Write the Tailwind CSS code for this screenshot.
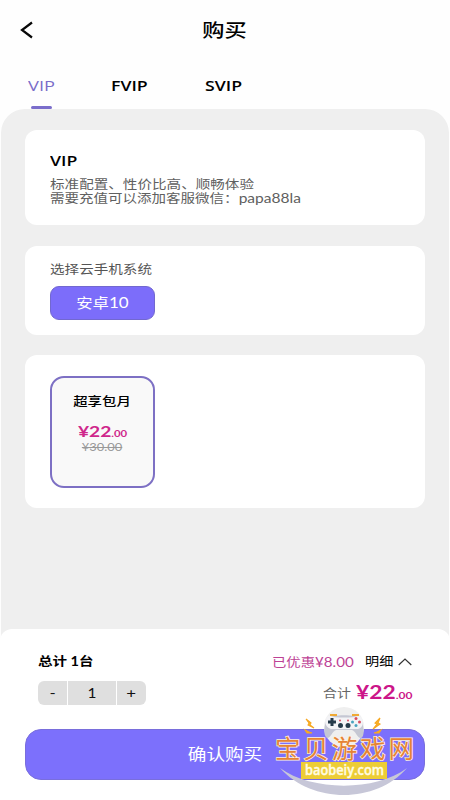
<!DOCTYPE html>
<html lang="zh-CN">
<head>
<meta charset="utf-8">
<title>购买</title>
<script src="https://cdn.jsdelivr.net/npm/@tailwindcss/browser@4"></script>
</head>
<body class="bg-white">
<div class="relative w-[450px] h-[800px] overflow-hidden bg-[#fefefe] flex flex-col font-['Lato','Noto_Sans_CJK_SC',sans-serif] text-black whitespace-nowrap">
  <header class="h-[60px] shrink-0 grid grid-cols-[1fr_auto_1fr] items-center px-5">
    <svg class="w-[14px] h-[18px]" viewBox="0 0 14 18" fill="none" stroke="#080808" stroke-width="2.2"><path d="M12 1.500 2 9l10 7.500"/></svg>
    <h1 class="text-[18.500px] leading-6 font-medium scale-x-[1.2]">购买</h1>
    <span></span>
  </header>
  <nav class="h-[49px] shrink-0 flex pl-7 pt-[16px] text-[14.500px] leading-5 font-semibold font-['Open_Sans',sans-serif]">
    <div class="w-[83px] flex flex-col text-[#7a6dc9]"><span class="w-fit font-medium origin-left scale-x-[1.260]">VIP</span><i class="block mt-[10px] ml-[3px] w-[21px] h-[3px] rounded-full bg-[#7a6dcb]"></i></div>
    <div class="w-[94px]"><span class="inline-block origin-left scale-x-[1.220]">FVIP</span></div>
    <div><span class="inline-block origin-left scale-x-[1.220]">SVIP</span></div>
  </nav>
  <main class="h-[540px] shrink-0 mx-px rounded-t-[24px] bg-[#efefef] px-6 pt-[21px] flex flex-col">
    <section class="h-[95px] rounded-xl bg-white pl-[25px] pt-[21px]">
      <h2 class="w-fit text-[14.500px] leading-5 font-semibold origin-left scale-x-[1.22] font-['Open_Sans',sans-serif]">VIP</h2>
      <div class="mt-[7px] text-[12.300px] leading-[14px] text-[#606060]">
        <p class="w-fit h-[14px] origin-left scale-x-[1.185]">标准配置、性价比高、顺畅体验</p>
        <p class="w-fit h-[14px] -mt-px origin-left scale-x-[1.18]">需要充值可以添加客服微信：<span class="text-[13.200px]">papa88la</span></p>
      </div>
    </section>
    <section class="mt-[21px] h-[89px] rounded-xl bg-white pl-[25px] pt-[16px]">
      <p class="w-fit text-[12.300px] leading-4 text-[#555] origin-left scale-x-[1.185]">选择云手机系统</p>
      <div class="mt-2 w-[105px] h-[34px] rounded-[9px] border border-[#7268cf] bg-[#7c6dfa] text-white flex items-center justify-center text-[14px]"><span class="scale-x-[1.17]">安卓<span class="text-[14.500px]">10</span></span></div>
    </section>
    <section class="mt-5 h-[153px] rounded-xl bg-white pl-[25px] pt-[21px]">
      <div class="w-[105px] h-[112px] rounded-[14px] border-2 border-[#7d70c4] bg-[#f9f9f9] flex flex-col items-center">
        <h3 class="mt-[16px] text-[12px] leading-4 font-medium scale-x-[1.2]">超享包月</h3>
        <p class="mt-[11px] text-[#cf278b] font-bold leading-5 scale-x-[1.2]"><span class="text-[16px]">¥22</span><span class="text-[9.500px]">.00</span></p>
        <p class="-mt-[3px] text-[11.500px] leading-3 text-[#999] line-through scale-x-[1.12]">¥30.00</p>
      </div>
    </section>
  </main>
  <footer class="relative -mt-[20px] pt-[21px] h-[171px] shrink-0 bg-white rounded-t-xl px-[25px]">
    <div class="flex justify-between pl-[13px] pr-[13px] h-6">
      <p class="text-[12.300px] leading-6 font-bold origin-left scale-x-[1.180]">总计 1台</p>
      <div class="flex items-center text-[12.300px] leading-6">
        <span class="w-[93px] text-[#bd4295]"><span class="inline-block origin-left scale-x-[1.165]">已优惠<span class="text-[13px]">¥8.00</span></span></span>
        <span class="w-[33px]"><span class="inline-block origin-left scale-x-[1.15]">明细</span></span>
        <svg class="w-[14px] h-2" viewBox="0 0 14 8" fill="none" stroke="#333" stroke-width="1.200"><path d="m.7 7 6.300-6 6.300 6"/></svg>
      </div>
    </div>
    <div class="flex justify-between items-start mt-[7px] pl-[13px] pr-[13px] h-6">
      <div class="flex gap-px h-6 rounded-md overflow-hidden text-[14px] text-[#111] text-center leading-6">
        <span class="w-[29px] bg-[#dfdfdf]"><span class="inline-block scale-x-[1.2]">-</span></span>
        <span class="w-[48px] bg-[#dfdfdf]"><span class="inline-block scale-x-[1.1]">1</span></span>
        <span class="w-[29px] bg-[#dfdfdf]"><span class="inline-block scale-x-[1.2]">+</span></span>
      </div>
      <div class="-mt-px flex items-center leading-6">
        <span class="w-[33px] text-[12px] text-[#666]"><span class="inline-block origin-left scale-x-[1.16]">合计</span></span>
        <span class="w-[56px] font-bold text-[#cc1689]"><span class="inline-block origin-left scale-x-[1.2]"><span class="text-[19px]">¥22</span><span class="text-[10px]">.00</span></span></span>
      </div>
    </div>
    <button class="mt-6 w-[400px] h-[51px] rounded-[16px] border border-[#796edc] bg-[#7c70fc] text-white flex items-center justify-center text-[15.500px]"><span class="scale-x-[1.200]">确认购买</span></button>
  </footer>
  <svg class="absolute left-[260px] top-[700px] w-[190px] h-[100px]" viewBox="0 0 190 100">
    <circle cx="84" cy="27" r="20" fill="#efefef"/>
    <path d="M20 68C51 91 115 92 147 68 116 104 52 104 20 68Z" fill="#c7c7d8"/>
    <path d="M67 19C72 14 96 14 101 19 104 26 105 37 101 38 97 38 96 31 92 30H76C72 31 71 38 67 38 63 36 64 25 67 19Z" fill="#c5c7d3"/>
    <path d="M68 16C77 18 91 18 100 16 104 20 104 28 98 29H71C64 27 64 19 68 16Z" fill="#f3f3f6"/>
    <path d="M70 15h7M92 15h7" stroke="#f0aa35" stroke-width="2"/>
    <path d="M72 18v8M68 22h8" stroke="#253a4a" stroke-width="3"/>
    <g fill="#253a4a"><circle cx="80.500" cy="25.500" r="2.500"/><circle cx="88" cy="25.500" r="2.500"/></g>
    <g fill="#d94c60"><circle cx="80" cy="20.500" r="1"/><circle cx="88" cy="20.500" r="1"/><circle cx="96" cy="18.500" r="1.500"/><circle cx="99.500" cy="22" r="1.500"/></g>
    <g fill="#49a4bf"><circle cx="92.500" cy="22" r="1.500"/><circle cx="96" cy="25.500" r="1.500"/></g>
    <path d="m46 19 5 4-1 2 4 3-6-3 1-2ZM120 18l-5 5 2 1-4 5 7-5-2-1ZM45 30l4 2 3 1-5 0ZM121 30l-4 2-3 1 5 0Z" fill="#f7b52d" stroke="#f7a822" stroke-width="1.100"/>
    <text x="15" y="58" font-size="25.500" textLength="139" lengthAdjust="spacing" font-family="Noto Sans CJK SC" fill="#e58335" stroke="#fff2df" stroke-width="1.500" paint-order="stroke">宝贝游戏网</text>
    <rect x="41" y="62" width="86" height="17" fill="#edcd35"/>
    <text x="45" y="74.500" font-size="15" textLength="79" lengthAdjust="spacingAndGlyphs" font-family="Open Sans" font-weight="600" fill="#fffbe1" stroke="#fffbe1" stroke-width=".4">baobeiy.com</text>
  </svg>
</div>
</body>
</html>
